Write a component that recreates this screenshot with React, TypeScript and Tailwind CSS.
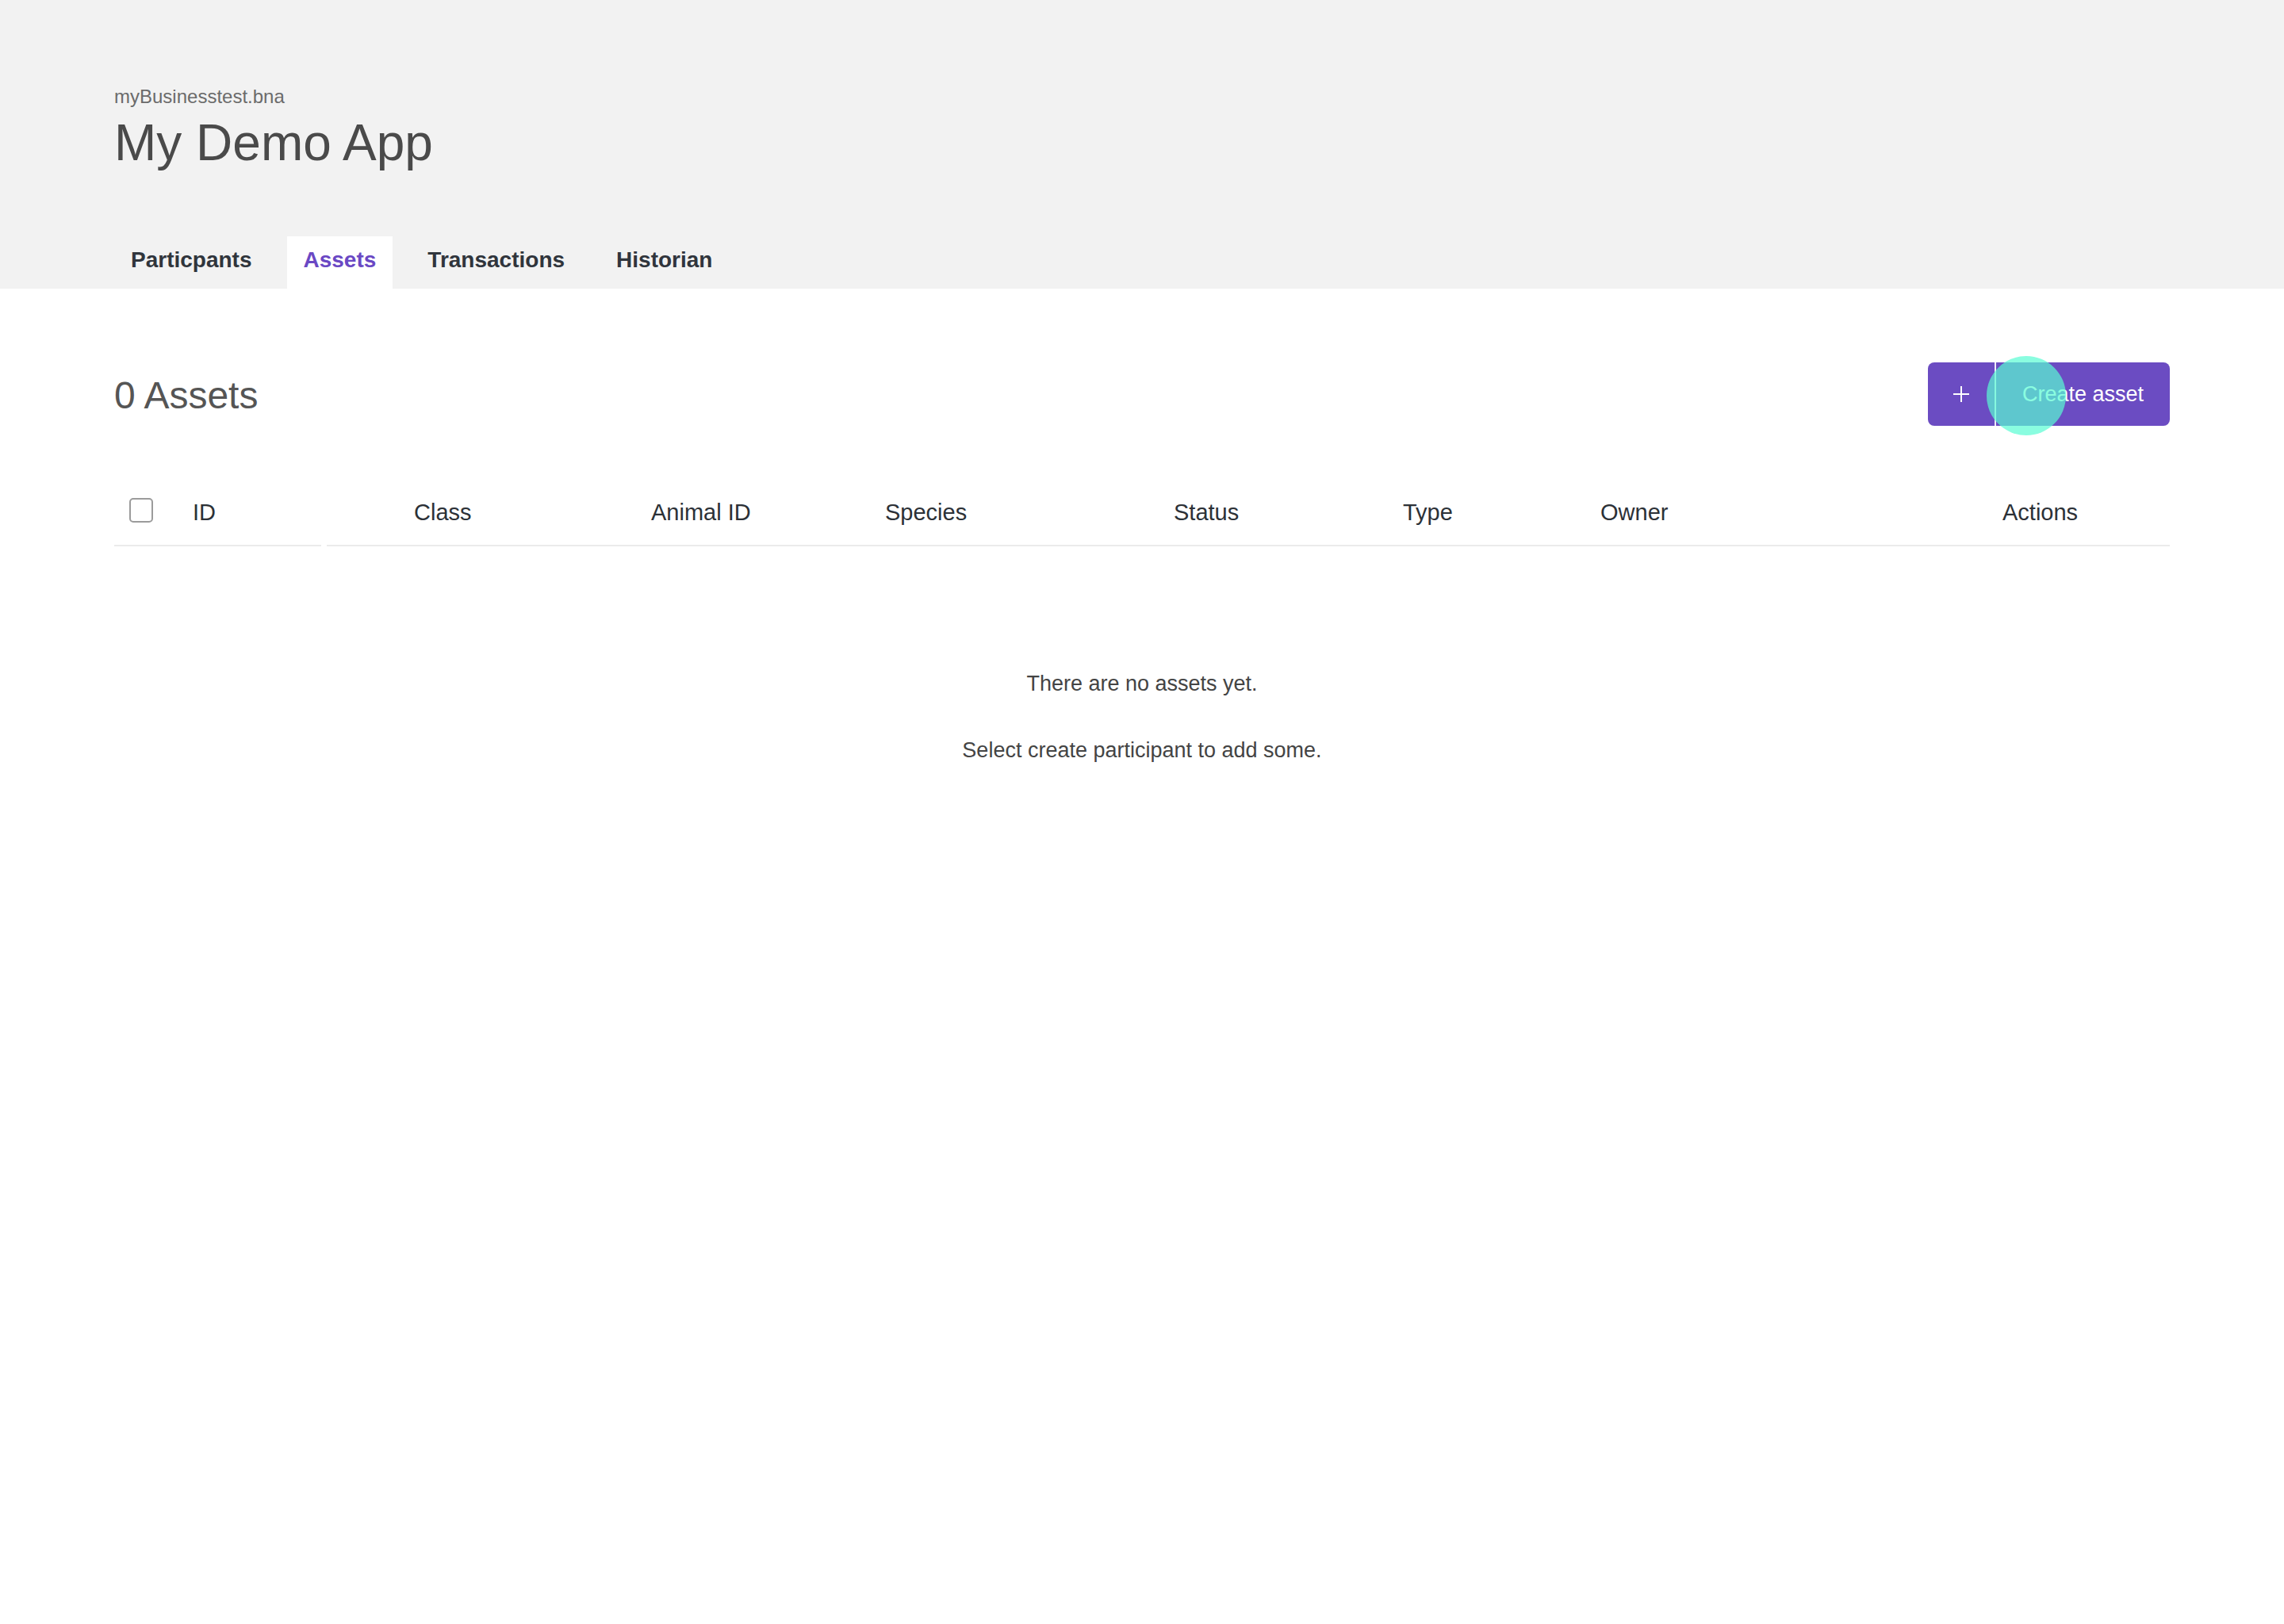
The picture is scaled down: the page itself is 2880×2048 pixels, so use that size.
import React from 'react';

const tabs = ['Particpants', 'Assets', 'Transactions', 'Historian'];

const App: React.FC = () => {
  const activeTab = 'Assets';

  return (
    <div className="min-h-screen bg-white font-['Liberation_Sans',Arial,sans-serif]">
      {/* Header */}
      <div className="bg-[#f2f2f2] px-[144px] pt-[110px]">
        <p className="text-[24px] leading-none text-[#6b6b6b]">myBusinesstest.bna</p>
        <h1 className="mt-[14px] text-[64px] leading-none font-light text-[#4a4a4a]">My Demo App</h1>

        {/* Tabs */}
        <div className="mt-[86px] flex gap-[23px]">
          {tabs.map((tab) => (
            <button
              key={tab}
              className={`px-[21px] pt-[16px] pb-[22px] text-[28px] leading-none font-bold ${
                tab === activeTab ? 'bg-white text-[#6a48c4]' : 'text-[#30353c]'
              }`}
            >
              {tab}
            </button>
          ))}
        </div>
      </div>

      {/* Content */}
      <div className="px-[144px]">
        <div className="mt-[93px] flex items-center justify-between">
          <h2 className="text-[48px] leading-none font-light text-[#555555] pt-[3px]">0 Assets</h2>

          <div className="relative">
            <button className="flex h-[80px] items-stretch overflow-hidden rounded-lg bg-[#6b4cc2] text-white">
              <span className="flex w-[84px] items-center justify-center">
                <svg width="22" height="22" viewBox="0 0 22 22" fill="none" stroke="white" strokeWidth="2">
                  <path d="M11 1v20M1 11h20" />
                </svg>
              </span>
              <span className="w-[2px] bg-white/90" />
              <span className="flex items-center px-[33px] text-[27px] font-light leading-none">Create asset</span>
            </button>
            {/* click indicator */}
            <span className="pointer-events-none absolute left-[74px] top-[-8px] h-[100px] w-[100px] rounded-full bg-[#58fcd3]/70" />
          </div>
        </div>

        {/* Table header */}
        <div className="mt-[70px] flex gap-[7px] text-[29px] leading-none text-[#2c3137]">
          <div className="flex h-[82px] w-[261px] items-center border-b-2 border-[#ebebeb] pb-[2px]">
            <span className="ml-[19px] -mt-[6px] h-[31px] w-[30px] rounded-[5px] border-2 border-[#9b9b9b] bg-white" />
            <span className="ml-[50px]">ID</span>
          </div>
          <div className="grid h-[82px] flex-1 grid-cols-[299px_295px_364px_289px_249px_507px_1fr] items-center border-b-2 border-[#ebebeb] pb-[2px] pl-[110px]">
            <span>Class</span>
            <span>Animal ID</span>
            <span>Species</span>
            <span>Status</span>
            <span>Type</span>
            <span>Owner</span>
            <span>Actions</span>
          </div>
        </div>

        {/* Empty state */}
        <div className="mt-[160px] flex flex-col items-center text-[27px] leading-none font-light text-[#444444]">
          <p>There are no assets yet.</p>
          <p className="mt-[57px]">Select create participant to add some.</p>
        </div>
      </div>
    </div>
  );
};

export default App;
